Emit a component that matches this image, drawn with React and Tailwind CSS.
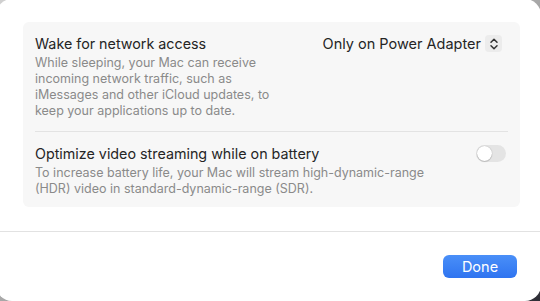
import { useState } from "react";

function Chevrons() {
  return (
    <svg width="10" height="14" viewBox="0 0 10 14" fill="none">
      <path d="M2 5.2L5 2.2L8 5.2" stroke="#333" strokeWidth="1.5" strokeLinecap="round" strokeLinejoin="round" />
      <path d="M2 8.8L5 11.8L8 8.8" stroke="#333" strokeWidth="1.5" strokeLinecap="round" strokeLinejoin="round" />
    </svg>
  );
}

function App() {
  const [hdr, setHdr] = useState(false);

  return (
    <div
      className="w-[540px] h-[301px] overflow-hidden bg-gradient-to-br from-[#d0d0d0] via-[#a8a8a8] to-[#2e2e36]"
      style={{ fontFamily: "Inter, 'Noto Sans', sans-serif" }}
    >
      <div className="-ml-[4px] -mt-[1px] w-[545px] h-[302px] bg-white rounded-[16px] flex flex-col">
        <div className="pt-[23px] pl-[27px] pr-[21px]">
          <div className="bg-[#f7f7f7] rounded-[6px] px-[12px]">
            <div className="flex justify-between pt-[13px] pb-[12px] border-b border-[#e3e3e3]">
              <div className="w-[250px]">
                <div className="text-[14.3px] leading-[18px] text-[#252525]">Wake for network access</div>
                <div className="text-[12.5px] leading-[16px] text-[#8a8a8a] mt-[2px]">
                  While sleeping, your Mac can receive
                  <br />
                  incoming network traffic, such as
                  <br />
                  iMessages and other iCloud updates, to
                  <br />
                  keep your applications up to date.
                </div>
              </div>
              <div className="flex items-start gap-[4px] mr-[6px]">
                <span className="text-[14.5px] leading-[18px] text-[#252525] whitespace-nowrap">Only on Power Adapter</span>
                <span className="flex items-center justify-center w-[17px] h-[17px] rounded-[4px] bg-[#ececec]">
                  <Chevrons />
                </span>
              </div>
            </div>
            <div className="flex justify-between pt-[13px] pb-[10px]">
              <div>
                <div className="text-[14.3px] leading-[18px] text-[#252525]">Optimize video streaming while on battery</div>
                <div className="text-[12.5px] leading-[16px] text-[#8a8a8a] mt-[2px]">
                  To increase battery life, your Mac will stream high-dynamic-range
                  <br />
                  (HDR) video in standard-dynamic-range (SDR).
                </div>
              </div>
              <button
                onClick={() => setHdr(!hdr)}
                className={`mr-[2px] w-[30px] h-[17px] rounded-full p-[1px] flex ${hdr ? "bg-[#3478f6] justify-end" : "bg-[#e4e4e4] justify-start"}`}
              >
                <span className="w-[15px] h-[15px] rounded-full bg-white shadow-[0_0_1px_rgba(0,0,0,0.35),0_1px_1px_rgba(0,0,0,0.15)]" />
              </button>
            </div>
          </div>
        </div>
        <div className="mt-[24px] border-t border-[#e2e2e2]" />
        <div className="flex justify-end pr-[24px] pt-[23px]">
          <button className="w-[74px] h-[23px] rounded-[6px] bg-gradient-to-b from-[#4a8ff8] to-[#2f74f0] text-white text-[14.5px] leading-[23px]">
            Done
          </button>
        </div>
      </div>
    </div>
  );
}

export default App;
